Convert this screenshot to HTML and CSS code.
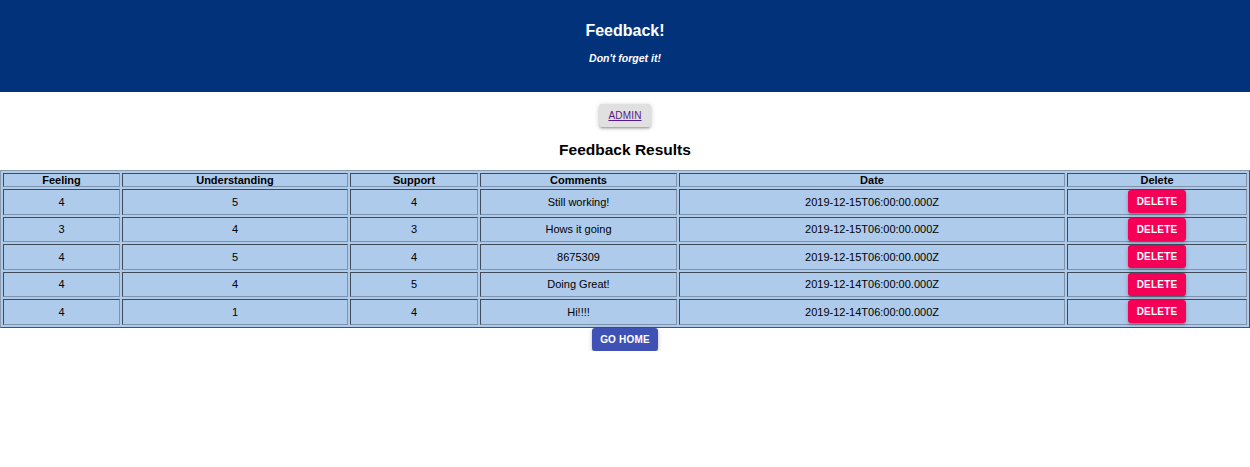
FILE: index.html
```html
<!DOCTYPE html>
<html>
<head>
<meta charset="utf-8">
<link rel="stylesheet" href="styles.css">
</head>
<body>
<header class="app-header">
  <h1 class="app-title">Feedback!</h1>
  <h4 class="app-subtitle"><i>Don't forget it!</i></h4>
</header>
<div class="admin-row">
  <button class="btn btn-default"><a href="#" class="admin-link">ADMIN</a></button>
</div>
<h2 class="results-title">Feedback Results</h2>
<table class="results">
  <thead>
    <tr>
      <th class="c1">Feeling</th>
      <th class="c2">Understanding</th>
      <th class="c3">Support</th>
      <th class="c4">Comments</th>
      <th class="c5">Date</th>
      <th class="c6">Delete</th>
    </tr>
  </thead>
  <tbody>
    <tr><td>4</td><td>5</td><td>4</td><td>Still working!</td><td>2019-12-15T06:00:00.000Z</td><td><button class="btn btn-delete">DELETE</button></td></tr>
    <tr><td>3</td><td>4</td><td>3</td><td>Hows it going</td><td>2019-12-15T06:00:00.000Z</td><td><button class="btn btn-delete">DELETE</button></td></tr>
    <tr><td>4</td><td>5</td><td>4</td><td>8675309</td><td>2019-12-15T06:00:00.000Z</td><td><button class="btn btn-delete">DELETE</button></td></tr>
    <tr><td>4</td><td>4</td><td>5</td><td>Doing Great!</td><td>2019-12-14T06:00:00.000Z</td><td><button class="btn btn-delete">DELETE</button></td></tr>
    <tr><td>4</td><td>1</td><td>4</td><td>Hi!!!!</td><td>2019-12-14T06:00:00.000Z</td><td><button class="btn btn-delete">DELETE</button></td></tr>
  </tbody>
</table>
<div class="home-row">
  <button class="btn btn-home">GO HOME</button>
</div>
</body>
</html>
```
FILE: styles.css
```css
html, body {
  margin: 0;
  padding: 0;
  background: #ffffff;
  font-family: "Liberation Sans", Arial, sans-serif;
  color: #000;
}

.app-header {
  height: 92px;
  background: #02327a;
  color: #ffffff;
  text-align: center;
  box-sizing: border-box;
  padding-top: 21px;
}

.app-title {
  margin: 0;
  font-size: 16px;
  font-weight: bold;
  line-height: 20px;
}

.app-subtitle {
  margin: 10px 0 0;
  font-size: 10.5px;
  font-weight: bold;
  line-height: 14px;
}

.admin-row {
  display: flex;
  justify-content: center;
  padding-top: 12px;
}

.btn {
  border: none;
  border-radius: 3px;
  font-family: "Liberation Sans", Arial, sans-serif;
  font-size: 10px;
  font-weight: bold;
  letter-spacing: 0.2px;
  cursor: pointer;
  box-shadow: 0 1px 5px rgba(0,0,0,0.2), 0 2px 2px rgba(0,0,0,0.14), 0 3px 1px -2px rgba(0,0,0,0.12);
}

.btn-default {
  width: 52px;
  height: 23px;
  background: #e0e0e0;
  padding: 0;
}

.admin-link {
  color: #551a8b;
  font-weight: normal;
  font-size: 10px;
  text-decoration: underline;
}

.results-title {
  margin: 13px 0 0;
  text-align: center;
  font-size: 15.5px;
  font-weight: bold;
  line-height: 20px;
}

.results {
  margin-top: 10px;
  width: 100%;
  table-layout: fixed;
  border: 1px outset #8a9bb0;
  border-spacing: 2px;
  background: #afcbeb;
  font-size: 11px;
  line-height: 12px;
}

.results th,
.results td {
  border: 1px inset #7f93ac;
  text-align: center;
}

.results th {
  font-weight: bold;
  padding: 0 1px;
  line-height: 12px;
  height: 12px;
}

.results td {
  padding: 0 1px;
  height: 23.5px;
}

.c1 { width: 113px; }
.c2 { width: 222px; }
.c3 { width: 124px; }
.c4 { width: 193px; }
.c5 { width: 382px; }

.btn-delete {
  display: block;
  margin: 0 auto;
  width: 58px;
  height: 23px;
  background: #f50057;
  color: #ffffff;
  padding: 0;
}

.home-row {
  display: flex;
  justify-content: center;
}

.btn-home {
  width: 66px;
  height: 23px;
  background: #3f51b5;
  color: #ffffff;
  padding: 0;
}
```
